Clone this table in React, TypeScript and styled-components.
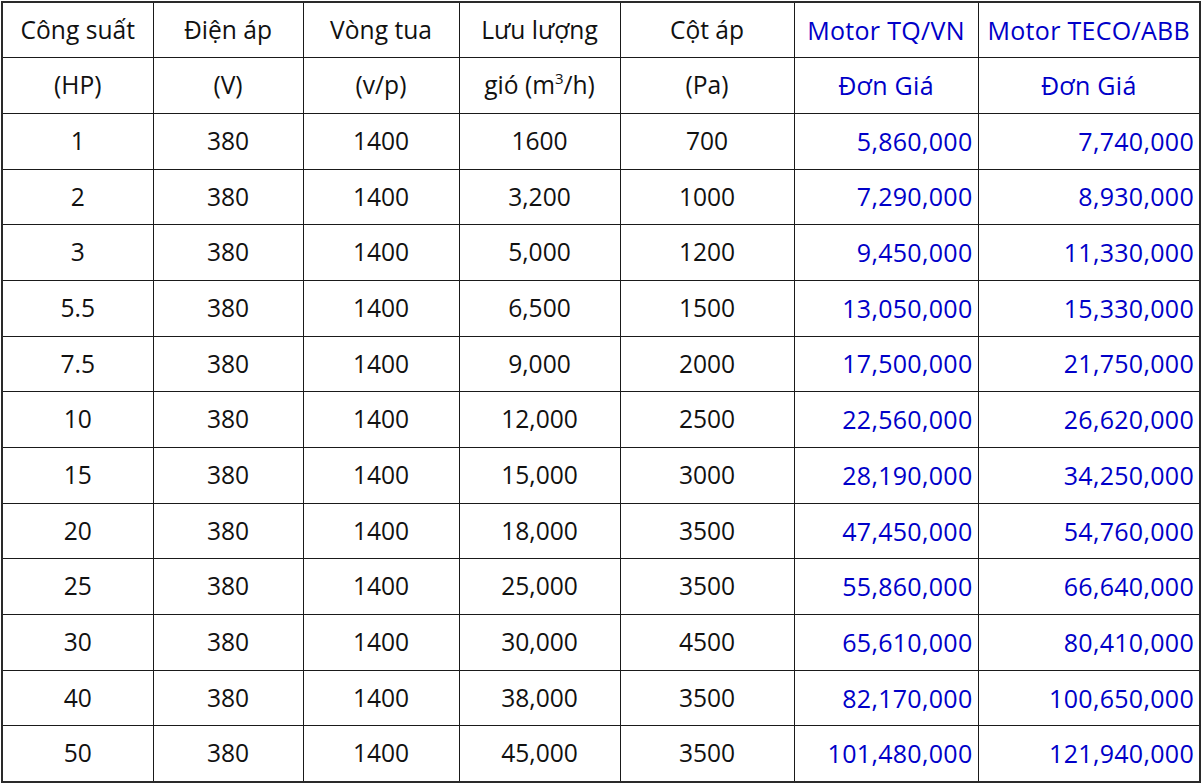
import styled, {createGlobalStyle} from 'styled-components';

const GlobalStyle = createGlobalStyle`
    html, body {
        margin: 0;
        padding: 0;
        background: #ffffff;
    }
    body {
        font-family: "Open Sans", "Noto Sans", sans-serif;
    }
`;

const Page = styled.div`
    padding: 1px 0 0 1px;
`;

const Table = styled.table`
    border-collapse: collapse;
    table-layout: fixed;
    width: 1198px;
    border: 2px solid #2a2a2a;
    font-size: 24.6px;
    color: #111111;
`;

const Row = styled.tr`
    height: 55.7px;
`;

const Cell = styled.td<{$price?: boolean; $blue?: boolean}>`
    border: 1px solid #1a1a1a;
    padding: 0 ${props => props.$price ? '5px' : '4px'} 0 4px;
    text-align: ${props => props.$price ? 'right' : 'center'};
    vertical-align: middle;
    white-space: nowrap;
    line-height: 1;
    color: ${props => (props.$price || props.$blue) ? '#0000c8' : '#111111'};
    font-size: ${props => (props.$price || props.$blue) ? '25px' : 'inherit'};
    font-weight: ${props => (props.$price || props.$blue) ? 500 : 400};
    letter-spacing: ${props => (props.$price || props.$blue) ? '0.3px' : 'normal'};
`;

const Sup = styled.sup`
    font-size: 15px;
    vertical-align: 10px;
    line-height: 0;
`;

const widths = [151, 150, 156, 161, 174, 184, 222];

const rows: string[][] = [
    ['1', '380', '1400', '1600', '700', '5,860,000', '7,740,000'],
    ['2', '380', '1400', '3,200', '1000', '7,290,000', '8,930,000'],
    ['3', '380', '1400', '5,000', '1200', '9,450,000', '11,330,000'],
    ['5.5', '380', '1400', '6,500', '1500', '13,050,000', '15,330,000'],
    ['7.5', '380', '1400', '9,000', '2000', '17,500,000', '21,750,000'],
    ['10', '380', '1400', '12,000', '2500', '22,560,000', '26,620,000'],
    ['15', '380', '1400', '15,000', '3000', '28,190,000', '34,250,000'],
    ['20', '380', '1400', '18,000', '3500', '47,450,000', '54,760,000'],
    ['25', '380', '1400', '25,000', '3500', '55,860,000', '66,640,000'],
    ['30', '380', '1400', '30,000', '4500', '65,610,000', '80,410,000'],
    ['40', '380', '1400', '38,000', '3500', '82,170,000', '100,650,000'],
    ['50', '380', '1400', '45,000', '3500', '101,480,000', '121,940,000'],
];

function App() {
    return (
        <Page>
            <GlobalStyle/>
            <Table>
                <colgroup>
                    {widths.map((w, i) => <col key={i} style={{width: w}}/>)}
                </colgroup>
                <tbody>
                <Row>
                    <Cell>Công suất</Cell>
                    <Cell>Điện áp</Cell>
                    <Cell>Vòng tua</Cell>
                    <Cell>Lưu lượng</Cell>
                    <Cell>Cột áp</Cell>
                    <Cell $blue>Motor TQ/VN</Cell>
                    <Cell $blue>Motor TECO/ABB</Cell>
                </Row>
                <Row>
                    <Cell>(HP)</Cell>
                    <Cell>(V)</Cell>
                    <Cell>(v/p)</Cell>
                    <Cell>gió (m<Sup>3</Sup>/h)</Cell>
                    <Cell>(Pa)</Cell>
                    <Cell $blue>Đơn Giá</Cell>
                    <Cell $blue>Đơn Giá</Cell>
                </Row>
                {rows.map((r) => (
                    <Row key={r[0]}>
                        {r.map((v, i) => (
                            <Cell key={i} $price={i >= 5}>{v}</Cell>
                        ))}
                    </Row>
                ))}
                </tbody>
            </Table>
        </Page>
    );
}

export default App;
